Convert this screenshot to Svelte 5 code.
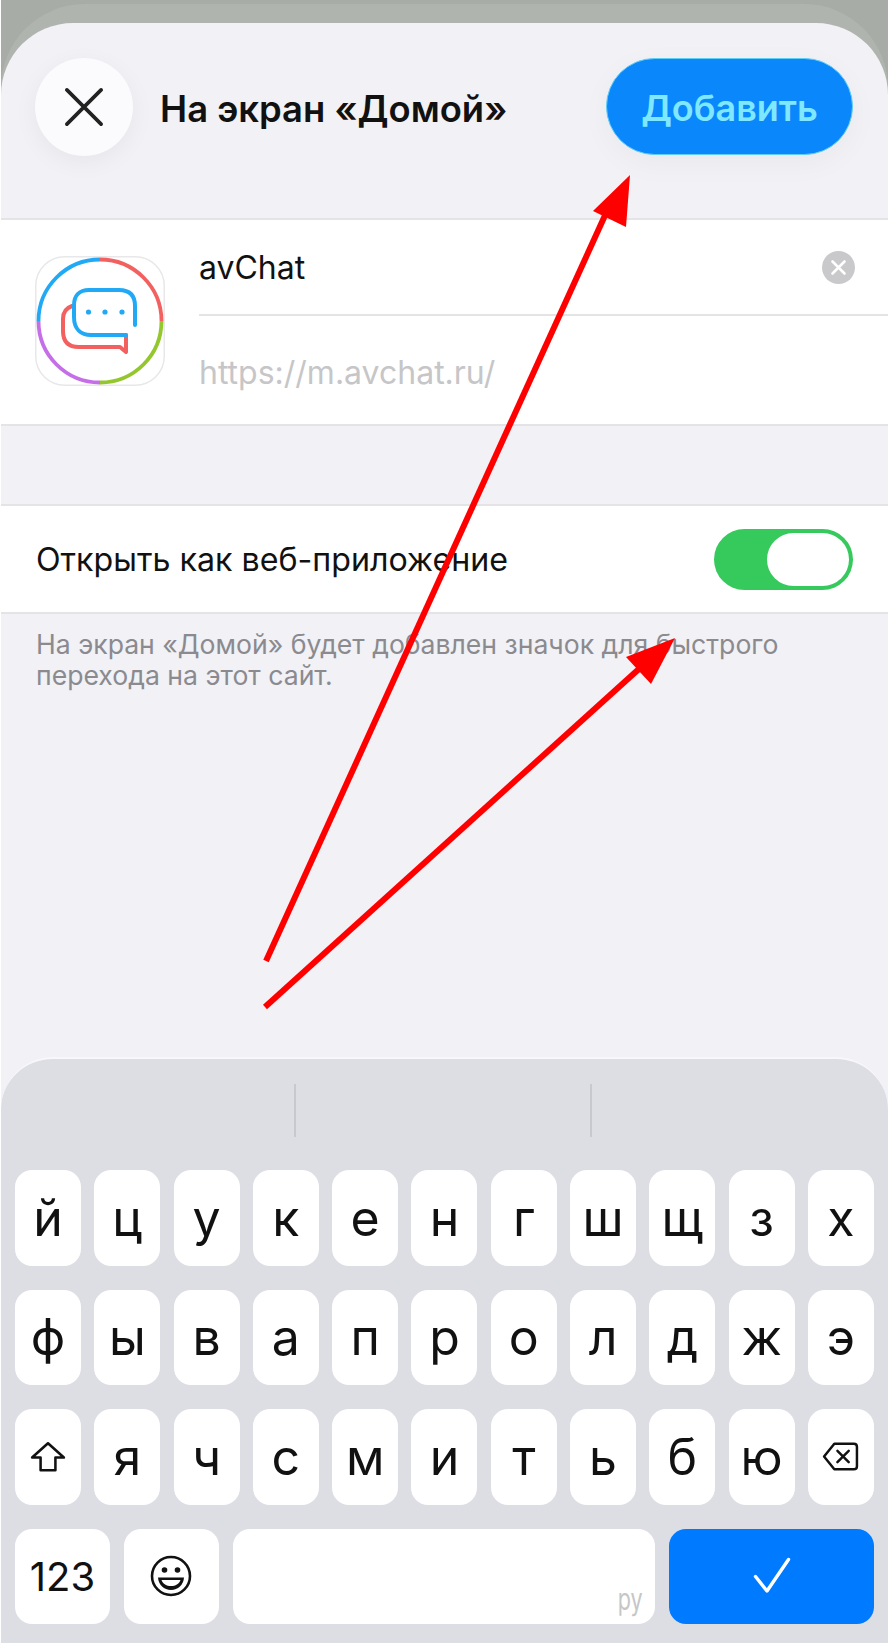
<script lang="ts">
    const rows = [
        ['й', 'ц', 'у', 'к', 'е', 'н', 'г', 'ш', 'щ', 'з', 'х'],
        ['ф', 'ы', 'в', 'а', 'п', 'р', 'о', 'л', 'д', 'ж', 'э']
    ];
    const third = ['я', 'ч', 'с', 'м', 'и', 'т', 'ь', 'б', 'ю'];
</script>

<div class="page">
    <div class="backdrop">
        <div class="back-card"></div>
    </div>

    <div class="sheet">
        <header class="head">
            <button class="close" aria-label="Закрыть">
                <svg viewBox="0 0 40 40" width="40" height="38">
                    <path d="M2 2 L38 38 M38 2 L2 38" fill="none" stroke="#222" stroke-width="3.8" stroke-linecap="round" />
                </svg>
            </button>
            <h1>На экран «Домой»</h1>
            <button class="add">Добавить</button>
        </header>

        <section class="card site">
            <svg class="app-icon" viewBox="0 0 130 130" width="130" height="130">
                <rect x="0.75" y="0.75" width="128.5" height="128.5" rx="29" fill="#fff" stroke="#e8e8ea" stroke-width="1.5" />
                <g fill="none" stroke-width="3.8">
                    <path d="M65 3.5 A61.5 61.5 0 0 1 126.5 65" stroke="#f2605f" />
                    <path d="M126.5 65 A61.5 61.5 0 0 1 65 126.5" stroke="#94c62d" />
                    <path d="M65 126.5 A61.5 61.5 0 0 1 3.5 65" stroke="#c56ee8" />
                    <path d="M3.5 65 A61.5 61.5 0 0 1 65 3.5" stroke="#22a9f5" />
                </g>
                <path d="M37 50 C31 52 28 57 28 63 V75 C28 86 34 91 44 91 H85 L91 96 V79" fill="none" stroke="#f2605f" stroke-width="4" stroke-linecap="round" stroke-linejoin="round" />
                <path d="M100 69 V50 C100 39 94 34 84 34 H54 C44 34 39 40 39 49 V61 C39 73 46 79 56 79 H91" fill="none" stroke="#22a9f5" stroke-width="4" stroke-linecap="round" />
                <circle cx="53.5" cy="56" r="2.6" fill="#22a9f5" />
                <circle cx="70" cy="56" r="2.6" fill="#22a9f5" />
                <circle cx="87" cy="56" r="2.6" fill="#22a9f5" />
            </svg>
            <div class="fields">
                <div class="name">
                    <span>avChat</span>
                    <span class="clear" aria-hidden="true">
                        <svg viewBox="0 0 33 33" width="33" height="33">
                            <circle cx="16.5" cy="16.5" r="16.5" fill="#c9c9cb" />
                            <path d="M10.5 10.5 L22.5 22.5 M22.5 10.5 L10.5 22.5" stroke="#fff" stroke-width="2.6" stroke-linecap="round" />
                        </svg>
                    </span>
                </div>
                <div class="url">https://m.avchat.ru/</div>
            </div>
        </section>

        <section class="card option">
            <span>Открыть как веб-приложение</span>
            <div class="toggle"><div class="knob"></div></div>
        </section>

        <p class="note">На экран «Домой» будет добавлен значок для быстрого<br />перехода на этот сайт.</p>

        <div class="keyboard">
            <div class="suggest">
                <i></i>
                <i></i>
            </div>
            {#each rows as row}
                <div class="row">
                    {#each row as k}
                        <div class="key">{k}</div>
                    {/each}
                </div>
            {/each}
            <div class="row">
                <div class="key">
                    <svg viewBox="0 0 34 30" width="36" height="32">
                        <path d="M17 2 L32 15.5 H24 V27.5 H10 V15.5 H2 Z" fill="none" stroke="#111" stroke-width="2.4" stroke-linejoin="round" />
                    </svg>
                </div>
                {#each third as k}
                    <div class="key">{k}</div>
                {/each}
                <div class="key">
                    <svg viewBox="0 0 36 30" width="37" height="31">
                        <path d="M12 2.5 H31 Q34 2.5 34 5.5 V24.5 Q34 27.5 31 27.5 H12 L2 15 Z" fill="none" stroke="#111" stroke-width="2.4" stroke-linejoin="round" />
                        <path d="M15 9.5 L26 20.5 M26 9.5 L15 20.5" stroke="#111" stroke-width="2.4" stroke-linecap="round" />
                    </svg>
                </div>
            </div>
            <div class="row bottom">
                <div class="key num">123</div>
                <div class="key emoji">
                    <svg viewBox="0 0 42 42" width="42" height="42">
                        <circle cx="21" cy="21" r="19" fill="none" stroke="#111" stroke-width="2.6" />
                        <circle cx="14.5" cy="15" r="2.8" fill="#111" />
                        <circle cx="27.5" cy="15" r="2.8" fill="#111" />
                        <path d="M8 22.5 H34 C33.5 30 28 35 21 35 C14 35 8.5 30 8 22.5 Z" fill="#111" />
                        <path d="M11.5 25 H30.5 C29 29 25.5 31 21 31 C16.5 31 13 29 11.5 25 Z" fill="#fff" />
                    </svg>
                </div>
                <div class="key space"><span>ру</span></div>
                <div class="key done">
                    <svg viewBox="0 0 38 38" width="38" height="38">
                        <path d="M2.5 19.5 L14 34 L35.5 2.5" fill="none" stroke="#fff" stroke-width="3.4" stroke-linecap="round" stroke-linejoin="round" />
                    </svg>
                </div>
            </div>
        </div>
    </div>

    <svg class="arrows" viewBox="0 0 889 1643" width="889" height="1643">
        <path d="M266 961 L612 200" stroke="#ff0000" stroke-width="6" fill="none" />
        <path d="M630 175 L593 211 L626 227 Z" fill="#ff0000" />
        <path d="M265 1007 L640 668" stroke="#ff0000" stroke-width="6" fill="none" />
        <path d="M675 638 L626 657 L651 684 Z" fill="#ff0000" />
    </svg>
</div>

<style>
    :global(body) {
        margin: 0;
        background: #fff;
    }

    .page {
        position: relative;
        width: 889px;
        height: 1643px;
        overflow: hidden;
        font-family: Inter, "Liberation Sans", sans-serif;
        color: #111;
    }

    .backdrop {
        position: absolute;
        inset: 0 1px auto 1px;
        height: 150px;
        background: #a8aca6;
    }

    .back-card {
        position: absolute;
        inset: 4px 0 auto 0;
        height: 146px;
        background: #b0b4ae;
        border-radius: 84px 84px 0 0;
    }

    .sheet {
        position: absolute;
        inset: 23px 1px 0 1px;
        background: #f1f1f6;
        border-radius: 72px 72px 0 0;
        display: flex;
        flex-direction: column;
    }

    .head {
        height: 195px;
        flex: none;
        box-sizing: border-box;
        padding: 35px 35px 0 34px;
        display: flex;
        align-items: flex-start;
    }

    .close {
        width: 98px;
        height: 98px;
        border: none;
        border-radius: 50%;
        background: #fbfbfd;
        box-shadow: 0 6px 24px rgba(0, 0, 0, 0.05);
        display: flex;
        align-items: center;
        justify-content: center;
        padding: 0;
    }

    h1 {
        margin: 0 0 0 27px;
        flex: 1;
        font-size: 36.4px;
        font-weight: 600;
        line-height: 102px;
        letter-spacing: 0;
    }

    .add {
        width: 247px;
        height: 97px;
        box-sizing: border-box;
        border: 1px solid #5fd0f5;
        border-radius: 49px;
        background: #0a88fb;
        color: #7fe8ff;
        font-family: inherit;
        font-size: 36px;
        font-weight: 600;
        padding: 3px 0 0;
        box-shadow: 0 8px 30px rgba(0, 0, 0, 0.04);
    }

    .card {
        background: #fff;
        border-top: 2px solid #e4e4e7;
        border-bottom: 2px solid #e4e4e7;
    }

    .site {
        height: 208px;
        flex: none;
        box-sizing: border-box;
        display: flex;
        align-items: flex-start;
        padding: 36px 0 0 34px;
    }

    .app-icon {
        flex: none;
    }

    .fields {
        flex: 1;
        margin: -36px 0 0 34px;
    }

    .name {
        height: 96px;
        box-sizing: border-box;
        display: flex;
        align-items: center;
        justify-content: space-between;
        padding: 0 33px 0 0;
        border-bottom: 2px solid #e4e4e7;
        font-size: 32px;
    }

    .clear {
        display: flex;
    }

    .url {
        padding-top: 37px;
        font-size: 32px;
        line-height: 40px;
        color: #c6c6c8;
    }

    .option {
        margin-top: 78px;
        height: 110px;
        flex: none;
        box-sizing: border-box;
        display: flex;
        align-items: center;
        justify-content: space-between;
        padding: 0 35px 0 35px;
        font-size: 32.2px;
    }

    .toggle {
        width: 139px;
        height: 61px;
        box-sizing: border-box;
        padding: 4px;
        border-radius: 31px;
        background: #36c95c;
        display: flex;
        justify-content: flex-end;
    }

    .knob {
        width: 82px;
        height: 53px;
        border-radius: 27px;
        background: #fff;
    }

    .note {
        margin: 15px 0 0 35px;
        font-size: 26.6px;
        line-height: 31px;
        color: #8a8a8f;
    }

    .keyboard {
        margin-top: auto;
        height: 586px;
        flex: none;
        box-sizing: border-box;
        background: #dddee4;
        border-top: 2px solid #f8f8fb;
        border-radius: 52px 52px 0 0;
        padding: 0 14px;
        display: flex;
        flex-direction: column;
    }

    .suggest {
        height: 111px;
        flex: none;
        display: flex;
        justify-content: center;
        gap: 294px;
        padding: 25px 3px 0 0;
        box-sizing: border-box;
    }

    .suggest i {
        display: block;
        width: 2px;
        height: 53px;
        background: #c8c9cf;
    }

    .row {
        display: flex;
        justify-content: space-between;
        flex: none;
        margin-bottom: 24px;
    }

    .key {
        width: 66px;
        height: 95.5px;
        background: #fff;
        border-radius: 17px;
        display: flex;
        align-items: center;
        justify-content: center;
        font-size: 50px;
        color: #111;
    }

    .bottom {
        gap: 14px;
        justify-content: flex-start;
        margin-bottom: 0;
    }

    .num {
        width: 95px;
        font-size: 40px;
    }

    .emoji {
        width: 95px;
    }

    .space {
        width: 423px;
        position: relative;
    }

    .space span {
        position: absolute;
        right: 13px;
        bottom: 7px;
        font-size: 30px;
        color: #c6c6c8;
        transform: scaleX(0.72);
        transform-origin: right bottom;
    }

    .done {
        width: 205px;
        background: #007aff;
    }

    .arrows {
        position: absolute;
        left: 0;
        top: 0;
        pointer-events: none;
    }
</style>
